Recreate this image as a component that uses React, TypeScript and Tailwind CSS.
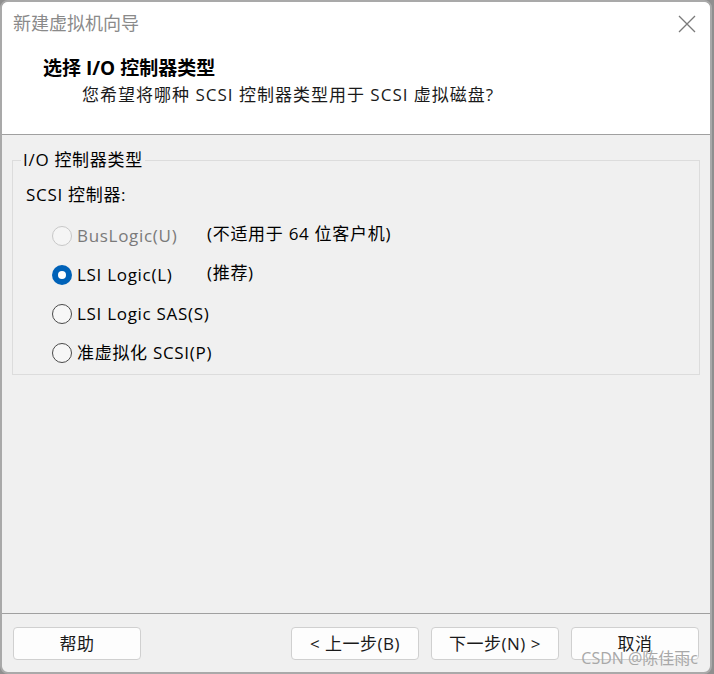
import React from "react";

type Opt = {
  label: string;
  note?: string;
  checked?: boolean;
  disabled?: boolean;
};

const options: Opt[] = [
  { label: "BusLogic(U)", note: "(不适用于 64 位客户机)", disabled: true },
  { label: "LSI Logic(L)", note: "(推荐)", checked: true },
  { label: "LSI Logic SAS(S)" },
  { label: "准虚拟化 SCSI(P)" },
];

const font = {
  fontFamily: '"Open Sans", "Noto Sans CJK SC", sans-serif',
};

function Radio({ checked, disabled }: { checked?: boolean; disabled?: boolean }) {
  if (checked) {
    return (
      <span className="flex h-[20px] w-[20px] shrink-0 items-center justify-center rounded-full bg-[#0062b8]">
        <span className="h-[8px] w-[8px] rounded-full bg-white" />
      </span>
    );
  }
  return (
    <span
      className={
        disabled
          ? "h-[20px] w-[20px] shrink-0 rounded-full border border-[#c8c8c8] bg-[#f5f5f5]"
          : "h-[20px] w-[20px] shrink-0 rounded-full border border-[#4a4a4a] bg-[#f7f7f7]"
      }
    />
  );
}

function Btn({ children }: { children: React.ReactNode }) {
  return (
    <button className="flex h-[33px] w-[128px] items-center justify-center rounded-[4px] border border-[#d0d0d0] bg-[#fdfdfd] text-[17px] tracking-[0.5px] text-[#1a1a1a]">
      {children}
    </button>
  );
}

export default function App() {
  return (
    <div className="h-[674px] w-[714px] bg-[#8f8f8f]" style={font}>
      <div className="flex h-[674px] w-[712px] flex-col overflow-hidden rounded-[8px] border-2 border-[#a9a9a9] bg-[#f0f0f0]">
        {/* title bar + header */}
        <div className="flex h-[133px] flex-col border-b border-[#a0a0a0] bg-white">
          <div className="flex h-[43px] items-center justify-between pl-[11px] pr-[14px]">
            <span className="text-[18px] text-[#8a8a8a]">新建虚拟机向导</span>
            <svg width="18" height="18" viewBox="0 0 18 18">
              <path d="M1 1 L17 17 M17 1 L1 17" stroke="#7a7a7a" strokeWidth="1.3" />
            </svg>
          </div>
          <div className="whitespace-nowrap pl-[41px] pt-[10px] text-[19px] font-bold leading-[26px] text-black">
            选择 I/O 控制器类型
          </div>
          <div className="whitespace-nowrap pl-[80px] pt-[1px] text-[17px] leading-[26px] tracking-[1px] text-[#1a1a1a]">
            您希望将哪种 SCSI 控制器类型用于 SCSI 虚拟磁盘?
          </div>
        </div>

        {/* body */}
        <div className="flex-1 px-[10px] pt-[14px]">
          <fieldset className="h-[226px] w-[688px] border border-[#dcdcdc] px-[13px] pb-0 pt-0">
            <legend className="ml-[-5px] px-[2px] text-[17px] leading-[22px] tracking-[0.7px] text-black">
              I/O 控制器类型
            </legend>
            <div className="mt-[13px] text-[17px] leading-[22px] tracking-[0.7px] text-black">
              SCSI 控制器:
            </div>
            <div className="mt-[19px] flex flex-col gap-[17px] pl-[26px]">
              {options.map((o) => (
                <div key={o.label} className="flex h-[22px] items-center whitespace-nowrap tracking-[0.7px]">
                  <Radio checked={o.checked} disabled={o.disabled} />
                  <span
                    className={
                      o.disabled
                        ? "ml-[5px] w-[125px] text-[17px] text-[#7a7a7a]"
                        : "ml-[5px] w-[125px] text-[17px] text-black"
                    }
                  >
                    {o.label}
                  </span>
                  {o.note && (
                    <span className="-mt-[4px] ml-[5px] text-[17px] text-black">{o.note}</span>
                  )}
                </div>
              ))}
            </div>
          </fieldset>
        </div>

        {/* footer */}
        <div className="relative flex h-[59px] items-start border-t border-[#a0a0a0] px-[11px] pt-[13px]">
          <Btn>帮助</Btn>
          <div className="ml-auto flex gap-[12px]">
            <Btn>&lt; 上一步(B)</Btn>
            <Btn>下一步(N) &gt;</Btn>
            <Btn>取消</Btn>
          </div>
          <span className="absolute bottom-[2px] right-[12px] text-[16px] text-[#a8a8a8]">
            CSDN @陈佳雨c
          </span>
        </div>
      </div>
    </div>
  );
}
